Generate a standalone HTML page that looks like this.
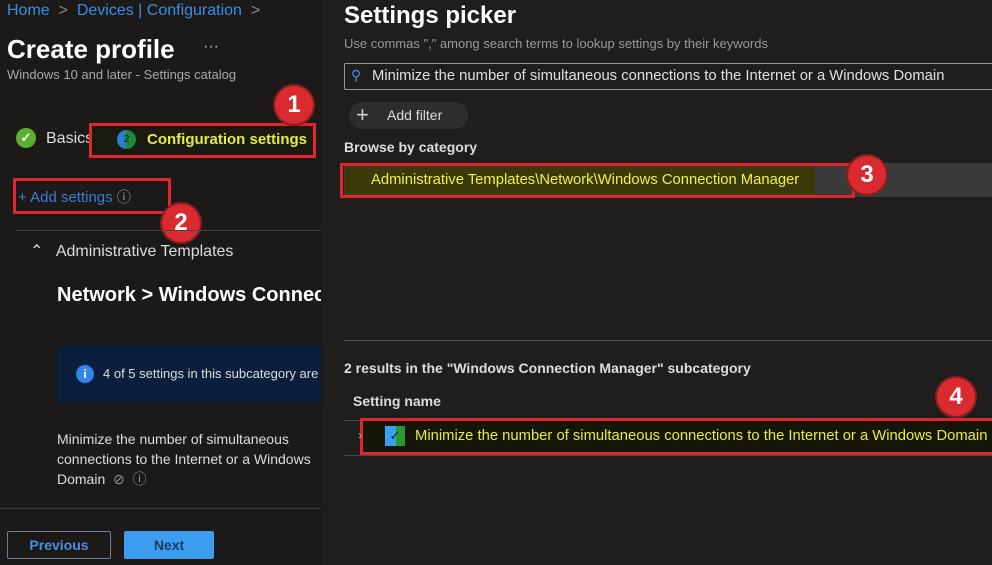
<!DOCTYPE html>
<html><head><meta charset="utf-8"><style>
*{box-sizing:border-box;margin:0;padding:0}
body{width:992px;height:565px;overflow:hidden;background:#1c1b1a;font-family:"Liberation Sans",sans-serif;color:#e6e6e6;position:relative}
.a{position:absolute;white-space:nowrap}
.left{position:absolute;left:0;top:0;width:322px;height:565px;background:#1b1a19}
.right{position:absolute;left:322px;top:0;width:670px;height:565px;background:#1f1e1d}
.badge{position:absolute;width:38px;height:38px;border-radius:50%;background:#d92a2f;color:#fff;font-weight:bold;font-size:24px;text-align:center;line-height:38px;box-shadow:0 0 0 2px #8a1d20}
.rbox{position:absolute;border:3px solid #e0262c}
</style></head><body>
<div class="left">
<div class="a" style="left:7px;top:2px;font-size:16px;color:#3a8ee6">Home &nbsp;<span style="color:#888">&gt;</span>&nbsp; Devices | Configuration &nbsp;<span style="color:#888">&gt;</span></div>
<div class="a" style="left:7px;top:34px;font-size:26px;font-weight:bold;color:#fff">Create profile</div>
<div class="a" style="left:203px;top:38px;font-size:16px;color:#bbb">···</div>
<div class="a" style="left:7px;top:67px;font-size:13px;color:#a8a8a8">Windows 10 and later - Settings catalog</div>
<div class="a" style="left:16px;top:128px;width:20px;height:20px;border-radius:50%;background:#5cb030;color:#fff;font-size:13px;text-align:center;line-height:20px;font-weight:bold">✓</div>
<div class="a" style="left:46px;top:130px;font-size:16px;color:#ddd">Basics</div>
<div class="rbox" style="left:89px;top:123px;width:227px;height:35px;background:#1a1a10"></div>
<div class="a" style="left:117px;top:130px;width:19px;height:19px;border-radius:50%;background:linear-gradient(90deg,#2a7fd4 45%,#1e8a3a 45%);font-size:10px;color:#111;text-align:center;line-height:19px">2</div>
<div class="a" style="left:147px;top:131px;font-size:15px;font-weight:bold;color:#e6ec40">Configuration settings</div>
<div class="badge" style="left:275px;top:86px">1</div>
<div class="rbox" style="left:13px;top:178px;width:158px;height:36px"></div>
<div class="a" style="left:18px;top:187px;font-size:15px;color:#3a7ed6">+ Add settings <span style="color:#aaa;font-size:14px">ⓘ</span></div>
<div class="badge" style="left:162px;top:204px">2</div>
<div style="position:absolute;left:16px;top:230px;width:305px;height:1px;background:#444"></div>
<div class="a" style="left:30px;top:241px;font-size:16px;color:#ddd">⌃&nbsp;&nbsp; Administrative Templates</div>
<div class="a" style="left:57px;top:284px;font-size:20px;font-weight:bold;color:#fff;width:264px;overflow:hidden">Network &gt; Windows Connection Manager</div>
<div style="position:absolute;left:57px;top:346px;width:264px;height:56px;background:#0a1f3e"></div>
<div class="a" style="left:76px;top:365px;width:18px;height:18px;border-radius:50%;background:#2f86e8;color:#fff;font-size:12px;font-weight:bold;text-align:center;line-height:18px">i</div>
<div class="a" style="left:103px;top:366px;font-size:13px;color:#ddd;width:218px;overflow:hidden">4 of 5 settings in this subcategory are</div>
<div class="a" style="left:57px;top:429px;font-size:14px;line-height:20px;color:#ddd;width:264px;overflow:hidden;white-space:normal">Minimize the number of simultaneous<br>connections to the Internet or a Windows<br>Domain &nbsp;<span style="color:#999">⊘ &nbsp;ⓘ</span></div>
<div style="position:absolute;left:0;top:508px;width:321px;height:1px;background:#3a3a3a"></div>
<div class="a" style="left:7px;top:531px;width:104px;height:28px;border:1px solid #6a7d99;border-radius:2px;color:#4a8fe0;font-size:14px;font-weight:bold;text-align:center;line-height:26px">Previous</div>
<div class="a" style="left:124px;top:531px;width:90px;height:28px;background:#3c9df0;border-radius:2px;color:#1a3a60;font-size:14px;font-weight:bold;text-align:center;line-height:28px">Next</div>
</div>
<div class="right">
<div class="a" style="left:22px;top:2px;font-size:24px;font-weight:bold;color:#fff">Settings picker</div>
<div class="a" style="left:22px;top:36px;font-size:13px;color:#999">Use commas "," among search terms to lookup settings by their keywords</div>
<div style="position:absolute;left:22px;top:63px;width:660px;height:27px;border:1px solid #999;border-radius:2px"></div>
<div class="a" style="left:29px;top:67px;font-size:14px;color:#4a8ee0">⚲</div>
<div class="a" style="left:50px;top:68px;font-size:14.8px;color:#e0e0e0">Minimize the number of simultaneous connections to the Internet or a Windows Domain</div>
<div style="position:absolute;left:27px;top:102px;width:119px;height:27px;border-radius:14px;background:#2e2d2c"></div>
<div class="a" style="left:34px;top:102px;font-size:22px;color:#ccc;line-height:26px">+</div>
<div class="a" style="left:65px;top:107px;font-size:14px;color:#ddd">Add filter</div>
<div class="a" style="left:22px;top:139px;font-size:14px;font-weight:bold;color:#ddd">Browse by category</div>
<div style="position:absolute;left:22px;top:163px;width:648px;height:34px;background:#3a3a3a"></div>
<div style="position:absolute;left:23px;top:167px;width:470px;height:27px;background:#3a3a08"></div>
<div class="rbox" style="left:18px;top:163px;width:515px;height:35px"></div>
<div class="a" style="left:49px;top:172px;font-size:14.8px;color:#f0f050">Administrative Templates\Network\Windows Connection Manager</div>
<div class="badge" style="left:526px;top:156px">3</div>
<div style="position:absolute;left:22px;top:340px;width:648px;height:1px;background:#555"></div>
<div class="a" style="left:22px;top:360px;font-size:14px;font-weight:bold;color:#ddd">2 results in the "Windows Connection Manager" subcategory</div>
<div class="a" style="left:31px;top:393px;font-size:14px;font-weight:bold;color:#ddd">Setting name</div>
<div class="badge" style="left:615px;top:378px">4</div>
<div style="position:absolute;left:22px;top:420px;width:648px;height:1px;background:#444"></div>
<div style="position:absolute;left:22px;top:455px;width:648px;height:1px;background:#444"></div>
<div class="rbox" style="left:38px;top:418px;width:640px;height:37px;background:#151508"></div>
<div class="a" style="left:36px;top:428px;font-size:12px;color:#aaa">›</div>
<div class="a" style="left:63px;top:426px;width:20px;height:20px;background:linear-gradient(90deg,#3aa0f0 55%,#2a9a30 55%);color:#123;font-size:13px;text-align:center;line-height:20px">✓</div>
<div class="a" style="left:93px;top:428px;font-size:14.8px;color:#e8ec40">Minimize the number of simultaneous connections to the Internet or a Windows Domain</div>
</div>
</body></html>
